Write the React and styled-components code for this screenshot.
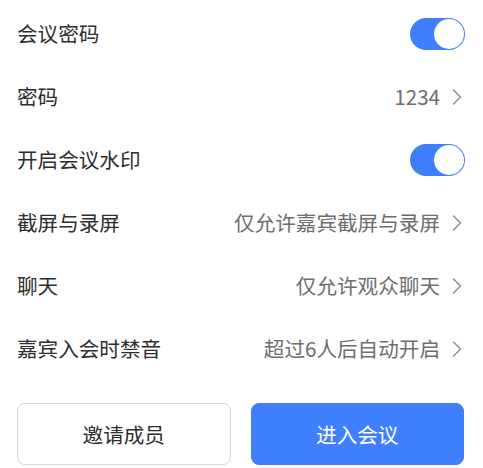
import React, { useState } from 'react';
import styled, { createGlobalStyle } from 'styled-components';

const GlobalStyle = createGlobalStyle`
  body {
    margin: 0;
    background: #fff;
    font-family: "Noto Sans CJK SC", "Noto Sans", sans-serif;
  }
`

const Panel = styled.div`
  width: 483px;
  padding: 2px 18px 0 17px;
  box-sizing: border-box;
`

const Row = styled.div`
  display: flex;
  align-items: center;
  justify-content: space-between;
  height: 63px;
`

const Label = styled.span`
  font-size: 20.6px;
  color: #2e2e2e;
  line-height: 1;
`

const Value = styled.span`
  display: flex;
  align-items: center;
  gap: 12px;
  margin-right: 3px;
  font-size: 20.6px;
  color: #6e6e6e;
  line-height: 1;
`

const Track = styled.button`
  width: 55px;
  height: 32px;
  border: none;
  border-radius: 16px;
  padding: 1px;
  display: flex;
  justify-content: ${p => (p.on ? 'flex-end' : 'flex-start')};
  background: ${p => (p.on ? '#3f7ffb' : '#e3e3e3')};
  cursor: pointer;
`

const Knob = styled.span`
  width: 30px;
  height: 30px;
  border-radius: 50%;
  background: #fff;
`

const Actions = styled.div`
  display: grid;
  grid-template-columns: 1fr 1fr;
  gap: 20px;
  margin-top: 23px;
  padding-right: 1px;
`

const Button = styled.button`
  height: 62px;
  border-radius: 8px;
  font-family: inherit;
  font-size: 20.6px;
  border: 1px solid ${p => (p.primary ? '#3f7ffb' : '#d6d6d6')};
  background: ${p => (p.primary ? '#3f7ffb' : '#fff')};
  color: ${p => (p.primary ? '#fff' : '#2e2e2e')};
  cursor: pointer;
`

const Chevron = () => (
  <svg width="10" height="16" viewBox="0 0 10 16" fill="none">
    <path d="M1.5 1L8.5 8L1.5 15" stroke="#8c8c8c" strokeWidth="1.4" strokeLinecap="round" strokeLinejoin="round" />
  </svg>
)

const Switch = ({ initial }) => {
  const [on, setOn] = useState(initial);
  return (
    <Track on={on ? 1 : 0} onClick={() => setOn(!on)}>
      <Knob />
    </Track>
  );
}

const settings = [
  { label: '会议密码', toggle: true },
  { label: '密码', value: '1234' },
  { label: '开启会议水印', toggle: true },
  { label: '截屏与录屏', value: '仅允许嘉宾截屏与录屏' },
  { label: '聊天', value: '仅允许观众聊天' },
  { label: '嘉宾入会时禁音', value: '超过6人后自动开启' },
]

const App = () => (
  <Panel>
    <GlobalStyle />
    {settings.map(item => (
      <Row key={item.label}>
        <Label>{item.label}</Label>
        {item.toggle ? <Switch initial={true} /> : (
          <Value>
            {item.value}
            <Chevron />
          </Value>
        )}
      </Row>
    ))}
    <Actions>
      <Button>邀请成员</Button>
      <Button primary>进入会议</Button>
    </Actions>
  </Panel>
)

export default App;
